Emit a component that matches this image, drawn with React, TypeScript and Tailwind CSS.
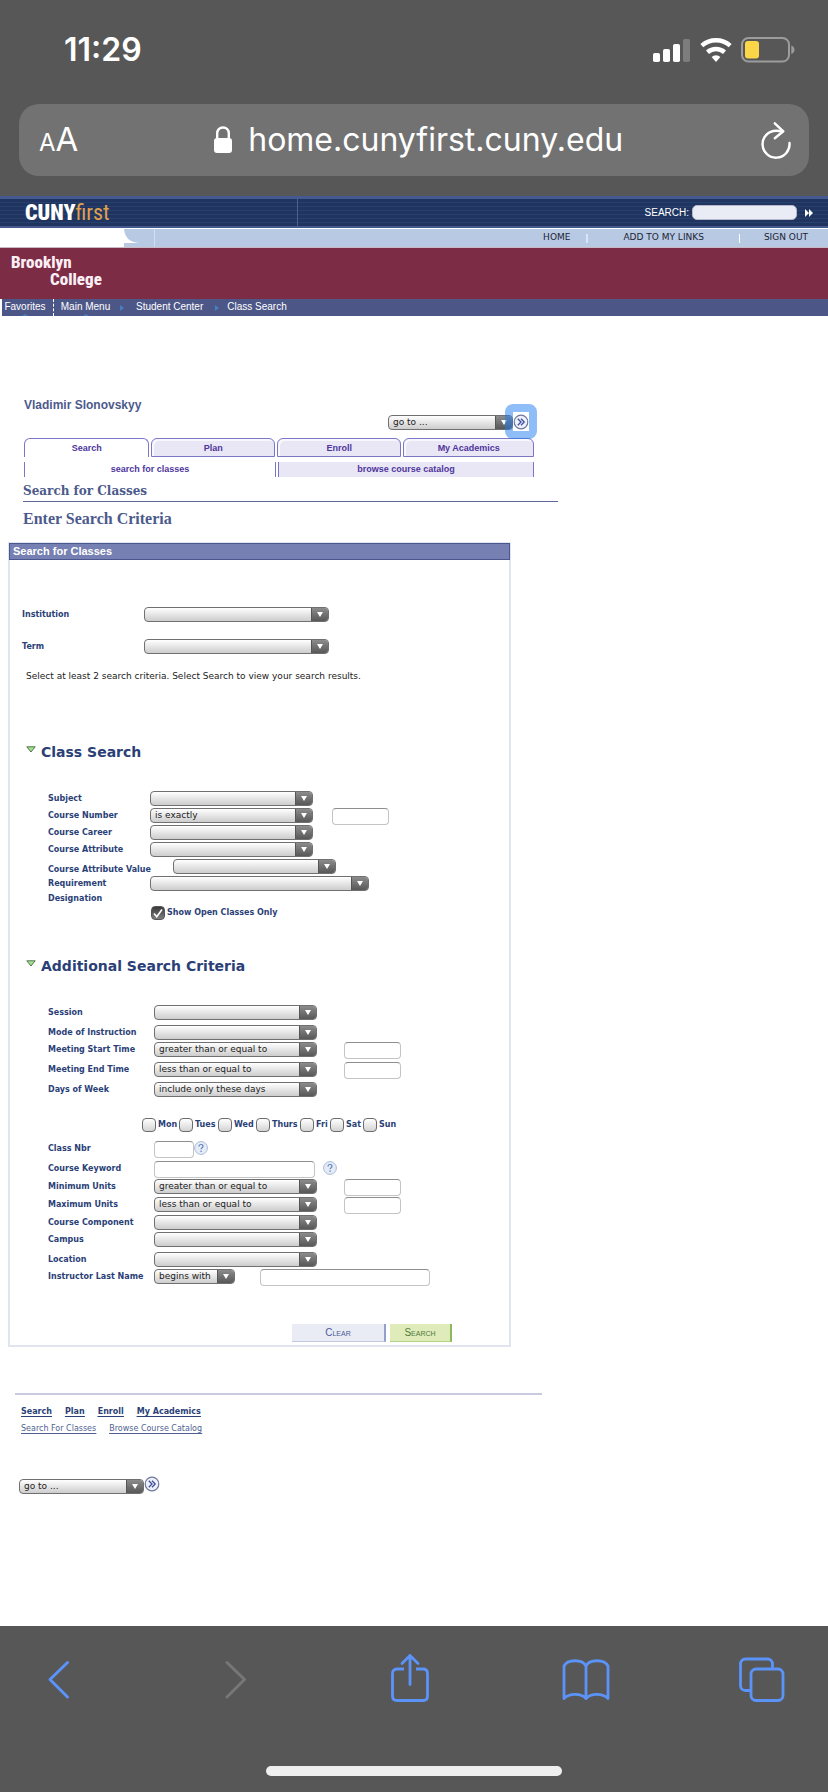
import React from "react";

const condensed = "font-['Roboto_Condensed','Liberation_Sans_Narrow',Roboto,sans-serif]";

function Chevrons() {
  return (
    <svg viewBox="0 0 16 16" className="size-4" aria-hidden="true">
      <circle cx="8" cy="8" r="6.8" fill="#eef1fb" stroke="#6d759c" strokeWidth="1.2" />
      <path d="M4.8 4.8 8 8 4.8 11.2M8 4.8 11.2 8 8 11.2" fill="none" stroke="#3d4f99" strokeWidth="1.3" />
    </svg>
  );
}

function Select({ id, width, value = "", label }: { id: string; width: string; value?: string; label?: string }) {
  return (
    <span className={`grid h-[15px] shrink-0 grid-cols-1 overflow-hidden rounded-[4px] border border-[#707070] bg-linear-to-b from-white to-[#cdcdcd] ${width}`}>
      <select
        id={id}
        aria-label={label}
        className="col-start-1 row-start-1 h-[13px] w-full appearance-none bg-transparent pr-4 pl-1 text-[9px] leading-[13px] text-[#222] outline-none"
      >
        <option>{value}</option>
      </select>
      <span className="pointer-events-none col-start-1 row-start-1 flex h-[13px] w-[17px] items-center justify-center justify-self-end border-l border-[#555] bg-linear-to-b from-[#8c8c8c] to-[#585858]">
        <svg viewBox="0 0 6 5" className="h-[5px] w-[6px]" aria-hidden="true">
          <path d="M0 0h6L3 5z" fill="#fff" />
        </svg>
      </span>
    </span>
  );
}

function Field({ id, width, label }: { id: string; width: string; label?: string }) {
  return (
    <input
      id={id}
      type="text"
      aria-label={label}
      className={`h-[17px] shrink-0 rounded-[4px] border border-[#c4c4c4] border-t-[#8e8e8e] bg-white px-1 text-[9px] outline-none ${width}`}
    />
  );
}

function Help({ label }: { label: string }) {
  return (
    <button type="button" aria-label={label} className="size-[14px] shrink-0">
      <svg viewBox="0 0 14 14" className="size-[14px]" aria-hidden="true">
        <circle cx="7" cy="7" r="6.4" fill="#e6ecf6" stroke="#a9bbdb" strokeWidth="1" />
        <path d="M5 5.4C5 4.2 5.9 3.5 7 3.5s2 .7 2 1.8c0 1.4-1.9 1.5-1.9 3M7.1 9.6v1.3" fill="none" stroke="#5f82c0" strokeWidth="1.2" />
      </svg>
    </button>
  );
}

function Row({
  id,
  label,
  labelWidth,
  height = "h-[17px]",
  children,
}: {
  id: string;
  label: React.ReactNode;
  labelWidth: string;
  height?: string;
  children: React.ReactNode;
}) {
  return (
    <div className={`flex items-start pl-[38px] ${height}`}>
      <label htmlFor={id} className={`shrink-0 text-[8px] leading-[15px] font-bold whitespace-nowrap ${labelWidth}`}>
        {label}
      </label>
      {children}
    </div>
  );
}

function SectionTitle({ children }: { children: React.ReactNode }) {
  return (
    <h3 className="flex h-5 items-start gap-[5px] pl-4 text-[14px] leading-5 font-bold">
      <svg viewBox="0 0 10 7" className="mt-1 h-[7px] w-[10px]" aria-hidden="true">
        <path d="M.8.8h8.4L5 6z" fill="#a4e28f" stroke="#44683f" strokeWidth=".9" />
      </svg>
      {children}
    </h3>
  );
}

const tabs = ["Search", "Plan", "Enroll", "My Academics"];
const days = [
  { name: "Mon", width: "w-[37px]" },
  { name: "Tues", width: "w-[39px]" },
  { name: "Wed", width: "w-[38px]" },
  { name: "Thurs", width: "w-[44px]" },
  { name: "Fri", width: "w-[30px]" },
  { name: "Sat", width: "w-[33px]" },
  { name: "Sun", width: "w-[34px]" },
];

function PhoneHeader() {
  return (
    <header className="bg-[#575757] px-[19px] pb-5 font-[Inter,sans-serif] text-white">
      <div className="flex h-[104px] items-start justify-between pt-[30px] pr-[14px] pl-[45px]">
        <span className="text-[32px] leading-10 font-semibold">11:29</span>
        <div className="flex items-center gap-[9px] pt-[7px]">
          <svg viewBox="0 0 38 24" className="h-6 w-[38px]" aria-label="Signal">
            <rect x="0" y="15" width="7" height="9" rx="1.8" fill="#fff" />
            <rect x="10" y="11" width="7" height="13" rx="1.8" fill="#fff" />
            <rect x="20" y="6" width="7" height="18" rx="1.8" fill="#fff" />
            <rect x="30" y="1" width="7" height="23" rx="1.8" fill="#7d7d7d" />
          </svg>
          <svg viewBox="0 0 32 24" className="h-6 w-8" aria-label="Wi-Fi">
            <path d="M1.800 7.600A21.700 21.700 0 0 1 30.200 7.600" fill="none" stroke="#fff" strokeWidth="4.400" />
            <path d="M7.500 14.300A12.900 12.900 0 0 1 24.500 14.300" fill="none" stroke="#fff" strokeWidth="4.500" />
            <path d="M16 24 11.600 19A6.700 6.700 0 0 1 20.400 19z" fill="#fff" />
          </svg>
          <svg viewBox="0 0 54 26" className="h-[26px] w-[54px]" aria-label="Battery">
            <rect x="1" y="1" width="47" height="23.500" rx="6.500" fill="none" stroke="#9c9c9c" strokeWidth="2" />
            <rect x="4" y="4" width="14" height="17.500" rx="3" fill="#fad648" />
            <path d="M50.300 8.500c2.200.9 3.200 2.300 3.200 4.300s-1 3.400-3.200 4.300z" fill="#9c9c9c" />
          </svg>
        </div>
      </div>
      <div className="flex h-[72px] items-center justify-between rounded-[20px] bg-[#727272] pr-[18px] pl-5">
        <button type="button" aria-label="Text size" className="flex items-baseline">
          <span className="text-[24px]">A</span>
          <span className="text-[33px]">A</span>
        </button>
        <div className="flex items-center gap-4">
          <svg viewBox="0 0 18 28" className="h-7 w-[18px]" aria-label="Secure">
            <rect x="0" y="12" width="18" height="15" rx="3" fill="#fff" />
            <path d="M3.200 13V7.500C3.200 4 5.500 1.500 9 1.500s5.800 2.500 5.800 6V13" fill="none" stroke="#fff" strokeWidth="2.400" />
          </svg>
          <span className="text-[32px]">home.cunyfirst.cuny.edu</span>
        </div>
        <button type="button" aria-label="Reload">
          <svg viewBox="0 0 32 38" className="h-[38px] w-8" aria-hidden="true">
            <path d="M30.500 22A13.500 13.500 0 1 1 17 9.700C19.500 9.700 22 9.800 24 10.200" fill="none" stroke="#fff" strokeWidth="2.400" strokeLinecap="round" />
            <path d="M15.800 2.300 24.300 10.300 15.800 17.300" fill="none" stroke="#fff" strokeWidth="2.400" strokeLinecap="round" strokeLinejoin="round" />
          </svg>
        </button>
      </div>
    </header>
  );
}

function SiteHeader() {
  return (
    <div className="font-['Liberation_Sans',Arial,sans-serif]">
      <div className="flex h-8 border-t-[3px] border-b-2 border-[#445a90] bg-[repeating-linear-gradient(to_bottom,#21345f_0_3px,#23426d_3px_4px)] text-white">
        <div className="flex w-[298px] items-center border-r border-[#4a6192] pl-[25px]">
          <span className={`text-[22px] leading-6 ${condensed}`}>
            <span className="font-black">CUNY</span>
            <span className="text-[#e0a04c]">first</span>
          </span>
        </div>
        <div className="flex flex-1 items-center justify-end pr-[15px]">
          <label htmlFor="site-search" className="pr-[3px] text-[10px]">
            SEARCH:
          </label>
          <input id="site-search" type="text" className="h-[15px] w-[105px] rounded-[5px] border border-[#b3b9ca] bg-[#e9ecf5] px-1 text-[10px] text-black outline-none" />
          <button type="button" aria-label="Go" className="ml-2">
            <svg viewBox="0 0 8 8" className="size-2" aria-hidden="true">
              <path d="M0 0l4 4-4 4zM4 0l4 4-4 4z" fill="#fff" />
            </svg>
          </button>
        </div>
      </div>
      <div className="flex h-5 border-t border-b border-t-white border-b-[#c8b9c5] bg-[#b7c9e3] font-['DejaVu_Sans',Verdana,sans-serif] text-[9px] text-[#1c2433]">
        <div className="w-[124px] bg-white" />
        <svg viewBox="0 0 30 18" className="h-[18px] w-[30px]" aria-hidden="true">
          <path d="M0 0C1 9 6 13.500 15 14H0z" fill="#fff" />
        </svg>
        <nav className="flex flex-1 items-center justify-end border-l border-[#d2ddee] pr-5">
          <a href="#home">HOME</a>
          <span className="ml-4 h-[9px] w-[2px] bg-[#dbe4f2]" />
          <a href="#links" className="ml-[35px]">ADD TO MY LINKS</a>
          <span className="ml-[35px] h-[9px] w-px bg-white" />
          <a href="#signout" className="ml-6">SIGN OUT</a>
        </nav>
      </div>
      <div className={`h-[51px] bg-[#7d2c45] pt-[6px] pl-[11px] text-[17px] font-extrabold text-[#fbeff5] ${condensed}`}>
        <div className="leading-[17px]">Brooklyn</div>
        <div className="pl-[39px] leading-[17px]">College</div>
      </div>
      <nav className="flex h-[17px] border-l-2 border-l-white bg-[#4d5787] text-[10px] leading-[15px] text-white">
        <a href="#favorites" className="flex w-[52px] flex-col items-center border-r border-dashed border-white pr-[5px]">
          Favorites
          <svg viewBox="0 0 6 2" className="h-[2px] w-[6px]" aria-hidden="true"><path d="M0 2 3 0l3 2z" fill="#477fc0" /></svg>
        </a>
        <a href="#menu" className="ml-[6px] flex w-[51px] flex-col items-center">
          Main Menu
          <svg viewBox="0 0 6 2" className="h-[2px] w-[6px]" aria-hidden="true"><path d="M0 2 3 0l3 2z" fill="#477fc0" /></svg>
        </a>
        <svg viewBox="0 0 4 6" className="mt-[6px] ml-[9px] h-[6px] w-1" aria-hidden="true"><path d="M0 0l4 3-4 3z" fill="#477fc0" /></svg>
        <a href="#student" className="ml-[12px]">Student Center</a>
        <svg viewBox="0 0 4 6" className="mt-[6px] ml-3 h-[6px] w-1" aria-hidden="true"><path d="M0 0l4 3-4 3z" fill="#477fc0" /></svg>
        <a href="#class" className="ml-[8px]">Class Search</a>
      </nav>
    </div>
  );
}

function SearchPanel() {
  return (
    <form className="mt-3 ml-2 max-w-[503px] border-2 border-[#e1e5ef] pb-[3px] text-[#2b3f77]">
      <h2 className="-mx-px -mt-px h-[17px] border border-[#4b568f] bg-[#7680b2] pl-[3px] font-['Liberation_Sans',Arial,sans-serif] text-[11px] leading-[14px] font-bold text-white">
        Search for Classes
      </h2>
      <div className="pt-[47px]">
        <div className="flex h-8 items-start pl-3">
          <label htmlFor="institution" className="w-[122px] text-[8px] leading-[15px] font-bold">Institution</label>
          <Select id="institution" width="w-[185px]" />
        </div>
        <div className="flex h-[15px] items-start pl-3">
          <label htmlFor="term" className="w-[122px] text-[8px] leading-[15px] font-bold">Term</label>
          <Select id="term" width="w-[185px]" />
        </div>
      </div>
      <p className="mt-[14px] pl-4 text-[9px] leading-4 text-[#222]">
        Select at least 2 search criteria. Select Search to view your search results.
      </p>

      <div className="mt-[58px]">
        <SectionTitle>Class Search</SectionTitle>
      </div>
      <div className="mt-[29px]">
        <Row id="subject" label="Subject" labelWidth="w-[102px]">
          <Select id="subject" width="w-[163px]" />
        </Row>
        <Row id="number" label="Course Number" labelWidth="w-[102px]">
          <Select id="number" width="w-[163px]" value="is exactly" />
          <span className="w-[19px]" />
          <Field id="number-value" label="Course number value" width="w-[57px]" />
        </Row>
        <Row id="career" label="Course Career" labelWidth="w-[102px]">
          <Select id="career" width="w-[163px]" />
        </Row>
        <Row id="attribute" label="Course Attribute" labelWidth="w-[102px]">
          <Select id="attribute" width="w-[163px]" />
        </Row>
        <Row id="attribute-value" label="Course Attribute Value" labelWidth="w-[125px] pt-[3px]">
          <Select id="attribute-value" width="w-[163px]" />
        </Row>
        <Row id="requirement" label={<>Requirement<br />Designation</>} labelWidth="w-[102px]" height="h-[29px]">
          <Select id="requirement" width="w-[219px]" />
        </Row>
        <div className="flex h-4 items-center gap-[2px] pl-[141px]">
          <span className="grid size-[14px]">
            <input
              id="open-only"
              type="checkbox"
              defaultChecked
              className="peer col-start-1 row-start-1 size-[14px] appearance-none rounded-[4px] border border-[#555] bg-linear-to-b from-white to-[#d4d4d4] checked:from-[#3a3a3a] checked:to-[#808080]"
            />
            <svg viewBox="0 0 14 14" className="pointer-events-none invisible col-start-1 row-start-1 size-[14px] peer-checked:visible" aria-hidden="true">
              <path d="M3 7.500 5.800 10.800 11 3.500" fill="none" stroke="#fff" strokeWidth="1.600" />
            </svg>
          </span>
          <label htmlFor="open-only" className="text-[8px] font-bold">Show Open Classes Only</label>
        </div>
      </div>

      <div className="mt-[35px]">
        <SectionTitle>Additional Search Criteria</SectionTitle>
      </div>
      <div className="mt-[29px]">
        <Row id="session" label="Session" labelWidth="w-[106px]" height="h-5">
          <Select id="session" width="w-[163px]" />
        </Row>
        <Row id="mode" label="Mode of Instruction" labelWidth="w-[106px]">
          <Select id="mode" width="w-[163px]" />
        </Row>
        <Row id="start" label="Meeting Start Time" labelWidth="w-[106px]" height="h-5">
          <Select id="start" width="w-[163px]" value="greater than or equal to" />
          <span className="w-[27px]" />
          <Field id="start-value" label="Start time" width="w-[57px]" />
        </Row>
        <Row id="end" label="Meeting End Time" labelWidth="w-[106px]" height="h-5">
          <Select id="end" width="w-[163px]" value="less than or equal to" />
          <span className="w-[27px]" />
          <Field id="end-value" label="End time" width="w-[57px]" />
        </Row>
        <Row id="days" label="Days of Week" labelWidth="w-[106px]" height="h-9">
          <Select id="days" width="w-[163px]" value="include only these days" />
        </Row>
        <div className="flex pl-[132px]">
          {days.map((day) => (
            <label key={day.name} className={`flex h-[14px] shrink-0 items-center gap-[2px] text-[8px] font-bold whitespace-nowrap ${day.width}`}>
              <input type="checkbox" className="size-[14px] shrink-0 appearance-none rounded-[4px] border border-[#6c6c6c] bg-linear-to-b from-white to-[#d4d4d4] checked:to-[#777]" />
              {day.name}
            </label>
          ))}
        </div>
        <div className="mt-[9px]">
          <Row id="class-nbr" label="Class Nbr" labelWidth="w-[106px]" height="h-5">
            <Field id="class-nbr" width="w-10" />
            <Help label="Class number help" />
          </Row>
          <Row id="keyword" label="Course Keyword" labelWidth="w-[106px]" height="h-[18px]">
            <Field id="keyword" width="w-[161px]" />
            <span className="w-2" />
            <Help label="Course keyword help" />
          </Row>
          <Row id="min" label="Minimum Units" labelWidth="w-[106px]" height="h-[18px]">
            <Select id="min" width="w-[163px]" value="greater than or equal to" />
            <span className="w-[27px]" />
            <Field id="min-value" label="Minimum units value" width="w-[57px]" />
          </Row>
          <Row id="max" label="Maximum Units" labelWidth="w-[106px]" height="h-[18px]">
            <Select id="max" width="w-[163px]" value="less than or equal to" />
            <span className="w-[27px]" />
            <Field id="max-value" label="Maximum units value" width="w-[57px]" />
          </Row>
          <Row id="component" label="Course Component" labelWidth="w-[106px]">
            <Select id="component" width="w-[163px]" />
          </Row>
          <Row id="campus" label="Campus" labelWidth="w-[106px]" height="h-5">
            <Select id="campus" width="w-[163px]" />
          </Row>
          <Row id="location" label="Location" labelWidth="w-[106px]">
            <Select id="location" width="w-[163px]" />
          </Row>
          <Row id="instructor" label="Instructor Last Name" labelWidth="w-[106px]">
            <Select id="instructor" width="w-[81px]" value="begins with" />
            <span className="w-[25px]" />
            <Field id="instructor-value" label="Instructor last name value" width="w-[170px]" />
          </Row>
        </div>
      </div>
      <div className="mt-[38px] flex justify-end gap-1 pr-[57px] font-['Liberation_Sans',Arial,sans-serif] text-[10px] leading-4">
        <button type="button" className="h-[18px] w-[94px] border-r-2 border-b border-r-[#93a0ca] border-b-[#c3cae0] bg-[#e9ecf5] text-[#4c5a94] [font-variant:small-caps]">Clear</button>
        <button type="button" className="h-[18px] w-[62px] border-r-2 border-b border-r-[#8cb85f] border-b-[#b4d284] bg-[#dfebb9] text-[#4f7a3c] [font-variant:small-caps]">Search</button>
      </div>
    </form>
  );
}

export default function App() {
  return (
    <div className="flex min-h-screen flex-col bg-white font-['DejaVu_Sans',Verdana,sans-serif]">
      <PhoneHeader />
      <SiteHeader />
      <main className="flex-1">
        <div className="max-w-[534px] pt-[80px] pl-6 font-['Liberation_Sans',Arial,sans-serif] font-bold">
          <div className="text-[12px] leading-[19px] text-[#4c5a8c]">Vladimir Slonovskyy</div>
          <div className="relative flex h-[23px] items-start justify-end pr-[5px] font-['DejaVu_Sans',Verdana,sans-serif] font-normal">
            <Select id="goto-top" label="Go to" width="w-[125px]" value="go to ..." />
            <span className="size-4" />
            <button type="button" aria-label="Go" className="absolute -top-[11px] -right-[3px] flex h-[35px] w-8 items-center justify-center rounded-[8px] border-8 border-[#1f7cf2]/50">
              <span className="flex h-[19px] w-4 shrink-0 items-center bg-white"><Chevrons /></span>
            </button>
          </div>
          <nav className="grid grid-cols-[125fr_123fr_124fr_130fr] gap-[2px] text-center text-[9px] leading-[19px] text-[#4e359c]">
            {tabs.map((tab, i) => (
              <a
                key={tab}
                href="#tab"
                className={
                  i === 0
                    ? "h-[19px] rounded-t-[6px] border border-b-0 border-[#7b76c6] bg-white"
                    : "h-[19px] rounded-t-[6px] border border-[#7b76c6] bg-[#e9e6f5] shadow-[inset_2px_2px_0_#f8f7fd]"
                }
              >
                {tab}
              </a>
            ))}
          </nav>
          <nav className="mt-[5px] grid grid-cols-[252fr_256fr] gap-[2px] text-center text-[9px] leading-[15px] text-[#4e359c]">
            <a href="#classes" className="border-x border-[#7b76c6]">search for classes</a>
            <a href="#catalog" className="border-x border-[#7b76c6] bg-[#e9e6f5]">browse course catalog</a>
          </nav>
        </div>
        <div className="ml-[23px] max-w-[535px] text-[#4c5a8c]">
          <h1 className="mt-[5px] h-5 border-b border-[#5f6899] font-['DejaVu_Serif',Georgia,serif] text-[12px] leading-[19px] font-bold">Search for Classes</h1>
          <h2 className="mt-[6px] font-['Liberation_Serif',Georgia,serif] text-[16px] leading-[22px] font-bold">Enter Search Criteria</h2>
        </div>
        <SearchPanel />
        <div className="mt-[46px] ml-[15px] max-w-[527px] border-t-2 border-[#c8cbdf] pt-2 pl-[6px] text-[8px] leading-[17px]">
          <nav className="flex gap-[13px] font-bold text-[#2b3f77] underline underline-offset-2">
            {tabs.map((tab) => (
              <a key={tab} href="#tab">{tab}</a>
            ))}
          </nav>
          <nav className="flex gap-[13px] text-[#4f5f92] underline underline-offset-2">
            <a href="#classes">Search For Classes</a>
            <a href="#catalog">Browse Course Catalog</a>
          </nav>
        </div>
        <div className="mt-[39px] ml-[19px] flex items-center">
          <Select id="goto-bottom" label="Go to" width="w-[125px]" value="go to ..." />
          <button type="button" aria-label="Go" className="pb-1"><Chevrons /></button>
        </div>
      </main>

      <footer className="h-[166px] bg-[#575757]">
        <nav className="flex h-[140px] items-start justify-between pt-[26px] pr-[41px] pl-[33px]">
          <button type="button" aria-label="Back" className="flex w-[50px] justify-center">
            <svg viewBox="0 0 24 50" className="h-[50px] w-6" fill="none" stroke="#5b93f9" strokeWidth="3" strokeLinecap="round" strokeLinejoin="round"><path d="M21.500 10.500 4 27.500l17.500 17.500" /></svg>
          </button>
          <button type="button" aria-label="Forward" className="flex w-[50px] justify-center">
            <svg viewBox="0 0 24 50" className="h-[50px] w-6" fill="none" stroke="#777" strokeWidth="3" strokeLinecap="round" strokeLinejoin="round"><path d="M5 10.500l17.500 17-17.500 17.500" /></svg>
          </button>
          <button type="button" aria-label="Share" className="flex w-[50px] justify-center">
            <svg viewBox="0 0 40 50" className="h-[50px] w-10" fill="none" stroke="#5b93f9" strokeWidth="2.800" strokeLinecap="round" strokeLinejoin="round">
              <path d="M14 17H7c-3 0-4.500 1.500-4.500 4.500V44c0 3 1.500 4.500 4.500 4.500h26c3 0 4.500-1.500 4.500-4.500V21.500c0-3-1.500-4.500-4.500-4.500h-7" strokeLinecap="butt" />
              <path d="M20 32.500V3.500M12 11.500l8-8 8 8" />
            </svg>
          </button>
          <button type="button" aria-label="Bookmarks" className="flex w-[50px] justify-center">
            <svg viewBox="0 0 50 50" className="h-[50px] w-[50px]" fill="none" stroke="#5b93f9" strokeWidth="2.800" strokeLinecap="round" strokeLinejoin="round">
              <path d="M25 14v32.500c-4.500-5.500-17-5.500-22 0V14c3.500-7 18.500-7 22 0zM25 14c3.500-7 18.500-7 22 0v32.500c-5-5.500-17.500-5.500-22 0" />
            </svg>
          </button>
          <button type="button" aria-label="Tabs" className="flex w-[50px] justify-center">
            <svg viewBox="0 0 48 50" className="h-[50px] w-12" fill="none" stroke="#5b93f9" strokeWidth="2.800">
              <rect x="13" y="17" width="32" height="31.500" rx="5" />
              <path d="M12.500 38.500H7.500c-3 0-5-2-5-5V12c0-3 2-5 5-5h22c3 0 5 2 5 5v4" />
            </svg>
          </button>
        </nav>
        <div className="mx-auto h-[10px] w-[296px] rounded-full bg-[#efefef]" />
      </footer>
    </div>
  );
}
